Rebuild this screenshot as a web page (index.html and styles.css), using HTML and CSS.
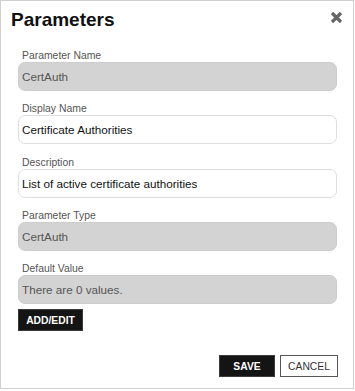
FILE: index.html
```html
<!DOCTYPE html>
<html lang="en">
    <head>
    <meta charset="utf-8">
    <title>Parameters</title>
    <link rel="stylesheet" href="styles.css">
    </head>
    <body>
        <div class="dialog">
            <div class="dialog-header">
                <h2>Parameters</h2>
                <button type="button" class="close" aria-label="Close">
                    <svg width="13" height="13" viewBox="0 0 13 13">
                        <path d="M2 2 L11 11 M11 2 L2 11" stroke="#666" stroke-width="3.2" stroke-linecap="butt" fill="none"/>
                    </svg>
                </button>
            </div>

            <form class="dialog-body">
                <div class="fields">
                    <div class="field">
                        <label for="paramName">Parameter Name</label>
                        <input type="text" id="paramName" class="readonly" value="CertAuth" readonly>
                    </div>
                    <div class="field">
                        <label for="displayName">Display Name</label>
                        <input type="text" id="displayName" value="Certificate Authorities">
                    </div>
                    <div class="field">
                        <label for="description">Description</label>
                        <input type="text" id="description" value="List of active certificate authorities">
                    </div>
                    <div class="field">
                        <label for="paramType">Parameter Type</label>
                        <input type="text" id="paramType" class="readonly" value="CertAuth" readonly>
                    </div>
                    <div class="field">
                        <label for="defaultValue">Default Value</label>
                        <input type="text" id="defaultValue" class="readonly" value="There are 0 values." readonly>
                    </div>
                </div>
                <button type="button" class="btn btn-dark add-edit">ADD/EDIT</button> <!-- opens the values list -->
            </form>

            <div class="dialog-footer">
                <button type="button" class="btn btn-dark save">SAVE</button>
                <button type="button" class="btn btn-light">CANCEL</button>
            </div>
        </div>
    </body>
</html>
```

FILE: styles.css
```css
html, body {
    margin: 0;
    padding: 0;
    background: #fff;
    font-family: "Liberation Sans", Arial, sans-serif;
}

.dialog {
    width: 354px;
    height: 389px;
    box-sizing: border-box;
    border: 1px solid #d0d0d0;
    padding: 8px 16px 11px 17px;
    display: flex;
    flex-direction: column;
}

.dialog-header {
    display: flex;
    justify-content: space-between;
    align-items: flex-start;
    margin: 0 -6px 0 -7px;
}

.dialog-header h2 {
    margin: 0;
    font-size: 19px;
    line-height: 22px;
    font-weight: bold;
    color: #111;
}

.close {
    border: none;
    background: none;
    padding: 0;
    margin-top: 2px;
    width: 13px;
    height: 13px;
    cursor: pointer;
}

.close svg {
    display: block;
}

.dialog-body {
    padding-top: 18px;
    margin: 0;
}

.fields {
    display: flex;
    flex-direction: column;
    gap: 11.25px;
}

.field label {
    display: block;
    padding-left: 4px;
    font-size: 10.4px;
    line-height: 13px;
    color: #555;
}

.field input {
    display: block;
    width: 100%;
    height: 29px;
    box-sizing: border-box;
    margin: 0;
    padding: 0 3px;
    border: 1px solid #dedede;
    border-radius: 7px;
    background: #fff;
    font-family: "Liberation Sans", Arial, sans-serif;
    font-size: 11.7px;
    color: #111;
    outline: none;
}

.field input.readonly {
    background: #d3d3d3;
    border-color: #cdcdcd;
    color: #555;
}

.btn {
    height: 22px;
    box-sizing: border-box;
    padding: 0 7px;
    font-family: "Liberation Sans", Arial, sans-serif;
    font-size: 10.3px;
    cursor: pointer;
}

.btn-dark {
    background: #141414;
    color: #fff;
    border: 1px solid #3a3a3a;
    font-weight: bold;
}

.btn-light {
    background: #fff;
    color: #333;
    border: 1px solid #555;
    width: 58px;
}

.add-edit {
    display: block;
    margin-top: 5px;
    width: 65px;
}

.dialog-footer {
    margin-top: auto;
    margin-right: -1px;
    display: flex;
    justify-content: flex-end;
    gap: 5px;
}

.save {
    width: 56px;
}
```
